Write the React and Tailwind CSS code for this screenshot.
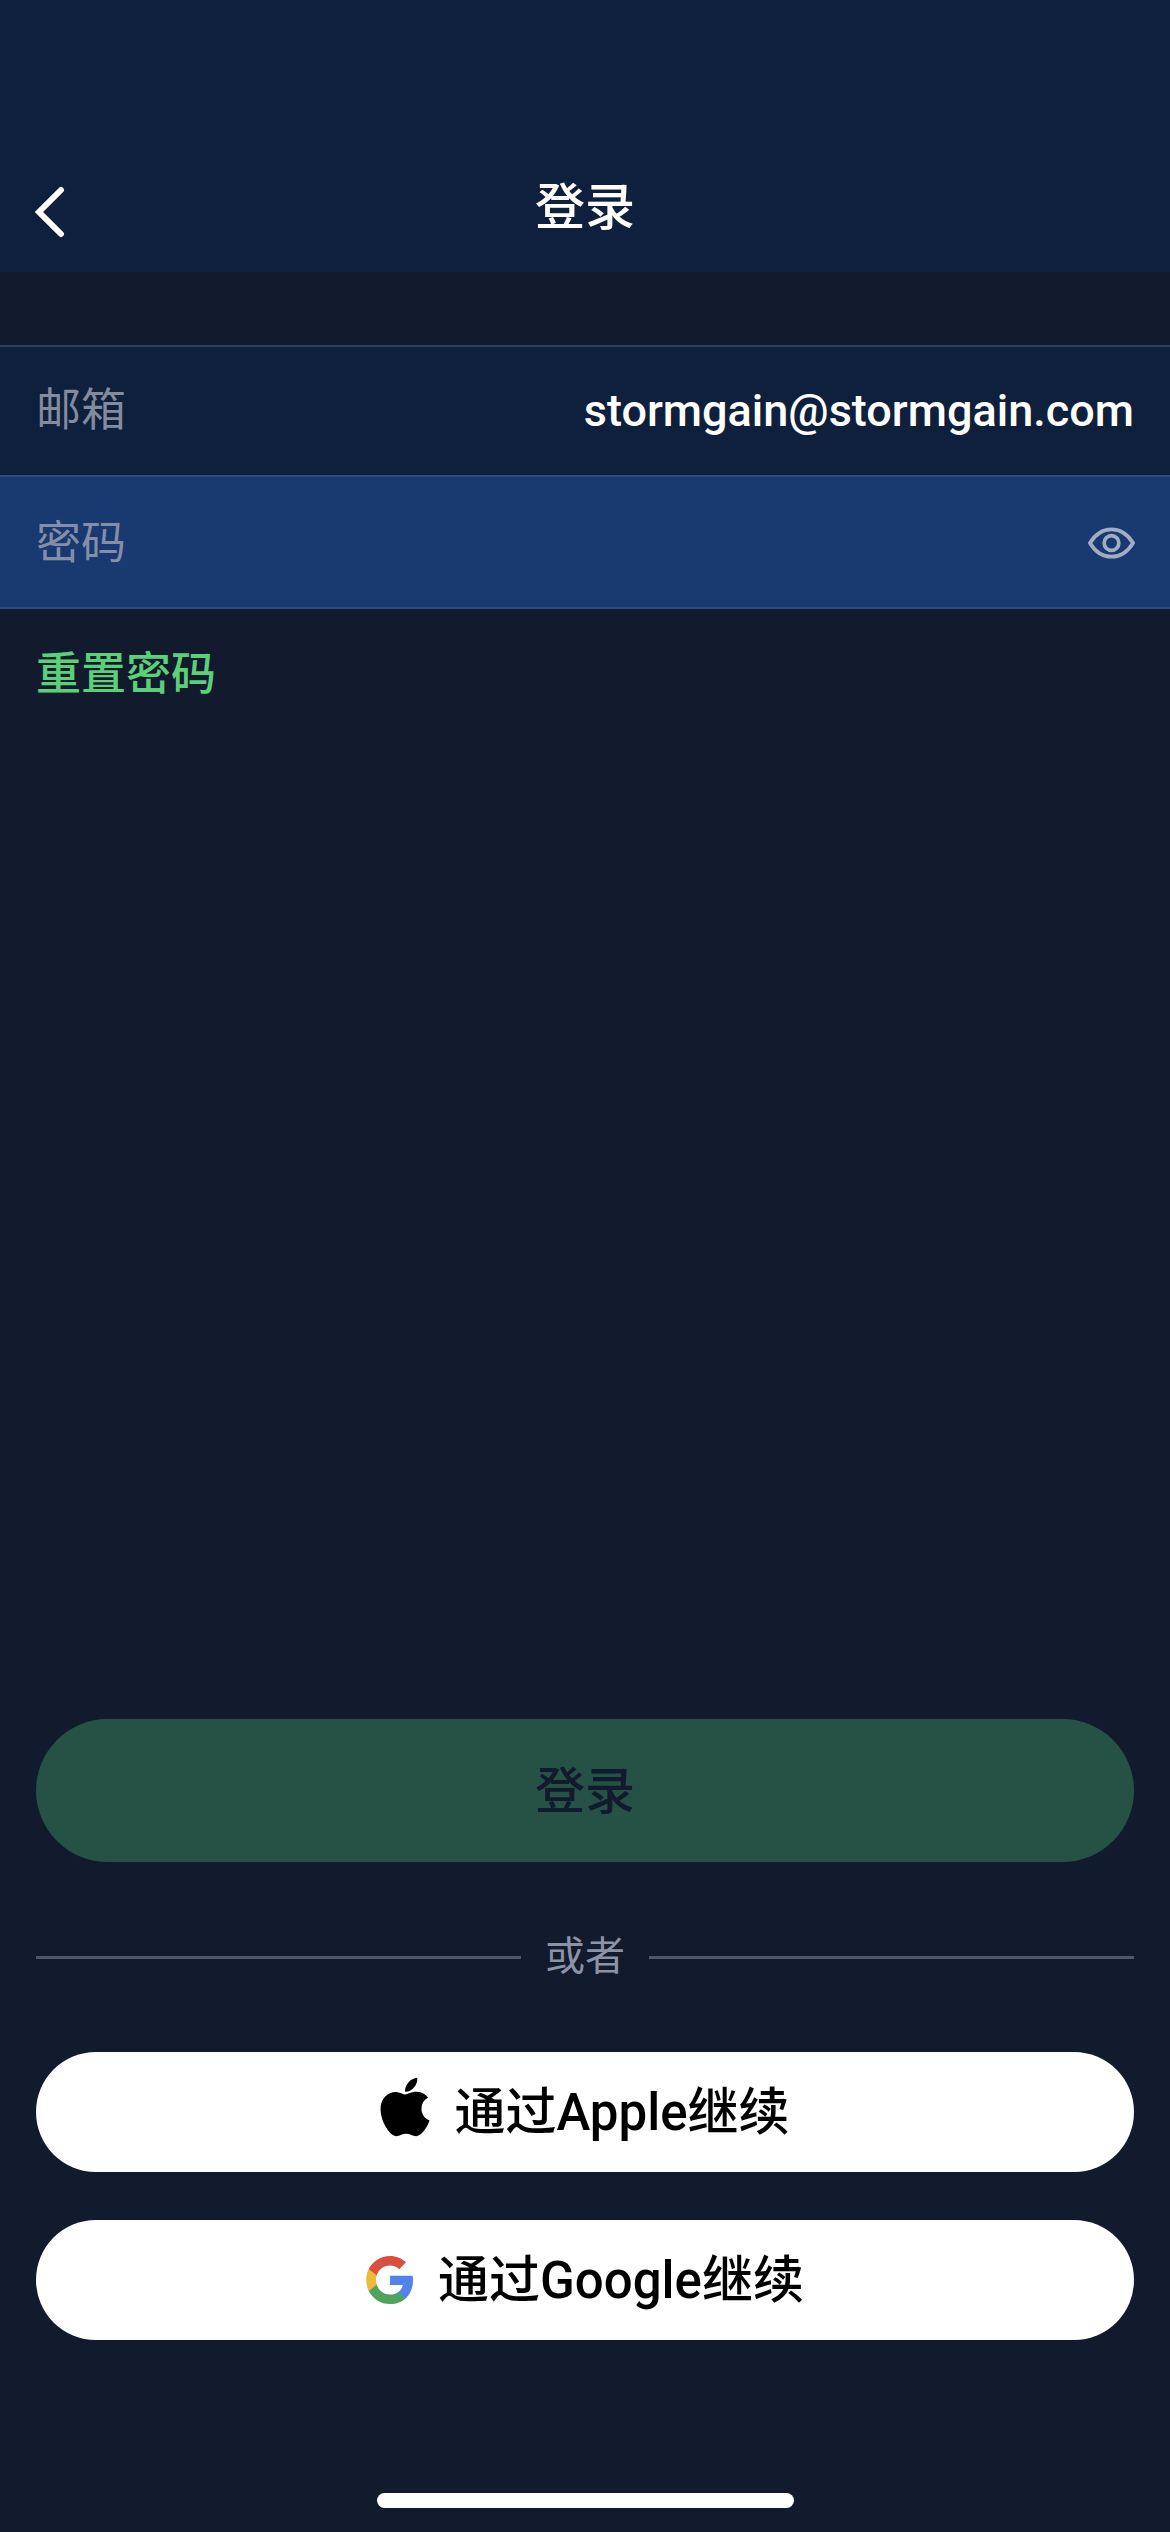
import { FaApple } from 'react-icons/fa';

const FONT = "font-['Roboto','Noto_Sans_CJK_SC',sans-serif]";

const GoogleLogo = () => (
  <svg viewBox="2 2 44 44" className="w-[48px] h-[48px] shrink-0">
    <path fill="#5283ec" d="M45.1 24.5c0-1.6-.1-3.1-.4-4.5H24v8.5h11.8c-.5 2.8-2.1 5.1-4.4 6.7v5.5h7.1c4.2-3.8 6.6-9.5 6.6-16.2z" />
    <path fill="#4fa45c" d="M24 46c5.9 0 10.9-2 14.5-5.3l-7.1-5.5c-2 1.3-4.5 2.1-7.4 2.1-5.7 0-10.5-3.8-12.2-9H4.5v5.7C8.1 41.1 15.5 46 24 46z" />
    <path fill="#f0b93a" d="M11.8 28.3c-.4-1.3-.7-2.8-.7-4.3s.3-3 .7-4.3V14H4.5C3 17 2.2 20.4 2.2 24s.8 7 2.3 10l7.3-5.7z" />
    <path fill="#d9503f" d="M24 10.8c3.2 0 6.1 1.1 8.4 3.3l6.3-6.3C34.9 4.2 29.9 2 24 2 15.5 2 8.1 6.9 4.5 14l7.3 5.7c1.7-5.1 6.5-8.9 12.2-8.9z" />
  </svg>
);

const SocialButton = ({ icon, label, gap }) => (
  <button className={`w-full h-[120px] rounded-full bg-white flex items-center justify-center ${gap} text-black text-[51px] font-medium`}>
    {icon}
    <span className="mt-[2px]">{label}</span>
  </button>
);

export default function App() {
  return (
    <div className={`${FONT} w-[1170px] h-[2532px] bg-[#121a2e] flex flex-col`}>
      {/* Header */}
      <div className="h-[272px] bg-[#0e203c] pt-[172px] px-[36px] relative shrink-0">
        <div className="flex items-center justify-center h-[72px] relative">
          <svg viewBox="0 0 32 50" className="w-[32px] h-[52px] absolute left-[-2px] top-[14px]" fill="none" stroke="white" strokeWidth="6" strokeLinecap="round" strokeLinejoin="miter">
            <path d="M27 3 L5 25 L27 47" />
          </svg>
          <h1 className="text-white text-[50px] font-medium leading-none">登录</h1>
        </div>
      </div>

      {/* Fields */}
      <div className="mt-[73px] shrink-0">
        <div className="h-[130px] bg-[#0e203c] border-t-2 border-[#2e4063] pl-[36px] pr-[36px] flex items-center justify-between">
          <span className="text-[45px] text-[#838b9f]">邮箱</span>
          <span className="text-[45px] text-white font-medium">stormgain@stormgain.com</span>
        </div>
        <div className="h-[134px] bg-[#183a70] border-t-2 border-b-2 border-[#2f4a7d] pl-[36px] pr-[35px] flex items-center justify-between">
          <span className="text-[45px] text-[#838ea8] mt-[4px]">密码</span>
          <svg viewBox="0 0 48 32" className="w-[47px] h-[32px] mt-[1px]" fill="none" stroke="#a3adc2" strokeWidth="3.8">
            <path d="M2 16 C8 6 15 2 24 2 C33 2 40 6 46 16 C40 26 33 30 24 30 C15 30 8 26 2 16 Z" />
            <circle cx="24" cy="16" r="7.5" />
          </svg>
        </div>
      </div>

      <p className="mt-[41px] ml-[36px] text-[45px] leading-[50px] text-[#5ccf79] font-medium">重置密码</p>

      {/* Bottom actions */}
      <div className="mt-auto px-[36px]">
        <button className="w-full h-[143px] rounded-full bg-[#255245] text-[#121a2e] text-[50px] font-medium pt-[4px]">登录</button>

        <div className="flex items-center mt-[72px] h-[46px]">
          <div className="flex-1 h-[3px] bg-[#4e566c]" />
          <span className="w-[128px] text-center text-[40px] leading-none text-[#8b93a7]">或者</span>
          <div className="flex-1 h-[3px] bg-[#4e566c]" />
        </div>

        <div className="mt-[72px] flex flex-col gap-[48px]">
          <SocialButton icon={<FaApple className="w-[50px] h-[68px] -mt-[10px]" />} label="通过Apple继续" gap="gap-[24px]" />
          <SocialButton icon={<GoogleLogo />} label="通过Google继续" gap="gap-[24px]" />
        </div>
      </div>

      <div className="mt-[153px] mb-[24px] mx-auto w-[417px] h-[15px] rounded-full bg-white shrink-0" />
    </div>
  );
}
